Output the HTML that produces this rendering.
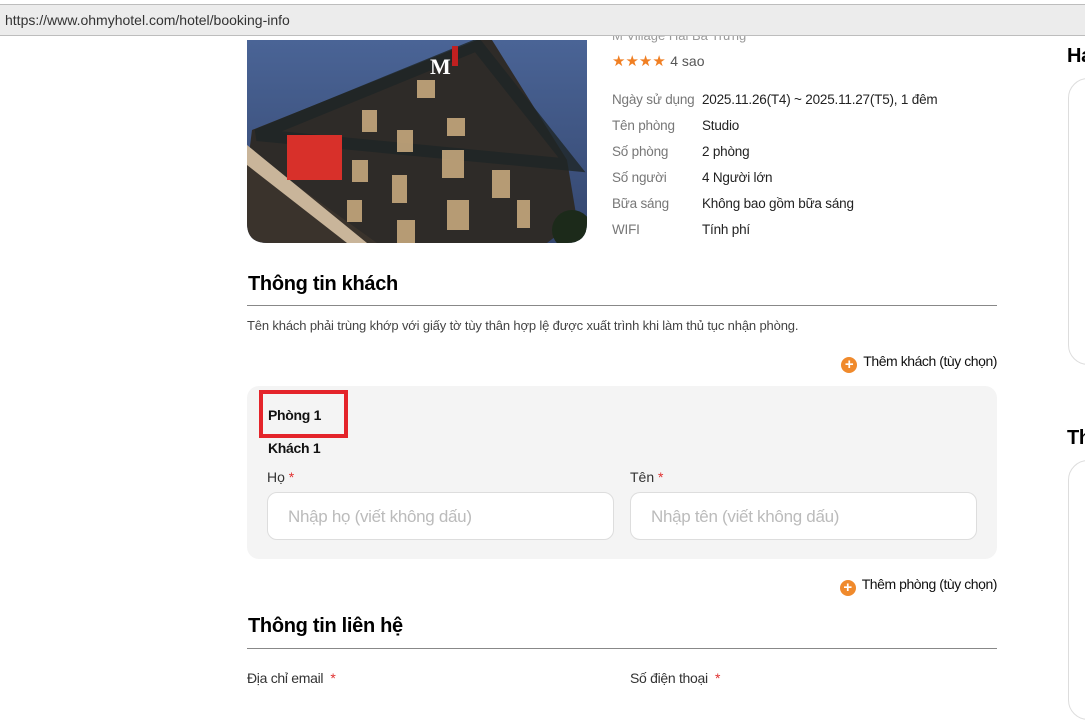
<!DOCTYPE html>
<html><head><meta charset="utf-8"><style>
*{margin:0;padding:0;box-sizing:border-box}
body{width:1085px;height:687px;overflow:hidden;background:#fff;font-family:"Liberation Sans",Arial,sans-serif;color:#111;position:relative}
.a{position:absolute;white-space:nowrap}
.bar{position:absolute;left:0;top:4px;width:1085px;height:32px;background:#ececec;border-top:1px solid #bdbdbd;border-bottom:1px solid #bdbdbd;z-index:2}
.lbl{color:#777;font-size:13.5px;letter-spacing:-0.2px}
.val{color:#222;font-size:13.5px;letter-spacing:-0.2px}
.h2{font-size:20px;font-weight:bold;color:#000;letter-spacing:-0.3px}
.line{position:absolute;left:247px;width:750px;height:1px;background:#888}
.inp{position:absolute;height:48px;background:#fff;border:1px solid #ddd;border-radius:10px;font-size:17px;color:#bbb;padding:14px 0 0 20px;letter-spacing:-0.3px}
.plus{display:inline-block;width:16px;height:16px;border-radius:50%;background:#f08a2c;color:#fff;font-size:15px;line-height:16px;text-align:center;font-weight:bold;vertical-align:-3px;margin-right:6px;letter-spacing:0}
.star{color:#f07f23;font-size:15px;letter-spacing:0}
.req{color:#e03030}
.add{font-size:14px;color:#111;letter-spacing:-0.45px}
</style></head><body>
<div class="bar"></div>
<div class="a" style="left:5px;top:12px;font-size:14px;color:#333;z-index:3">https://www.ohmyhotel.com/hotel/booking-info</div>

<svg class="a" style="left:247px;top:40px" width="340" height="203" viewBox="0 0 340 203">
<defs><clipPath id="c"><path d="M0 0H340V183Q340 203 320 203H20Q0 203 0 183Z"/></clipPath>
<linearGradient id="s" x1="0" y1="0" x2="0" y2="1"><stop offset="0" stop-color="#4a6496"/><stop offset="1" stop-color="#34466e"/></linearGradient></defs>
<g clip-path="url(#c)">
<rect width="340" height="203" fill="url(#s)"/>
<polygon points="5,90 230,0 245,0 320,120 330,180 300,203 90,203 0,130" fill="#2e2b28"/>
<polygon points="10,95 230,5 325,125" fill="none" stroke="#1e2626" stroke-width="12" opacity=".8"/>
<polygon points="0,110 130,203 0,203" fill="#3a332c"/>
<polygon points="0,105 120,203 100,203 0,125" fill="#c9b59a"/>
<rect x="40" y="95" width="55" height="45" fill="#d8302a"/>
<g fill="#d9b888" opacity=".8">
<rect x="105" y="120" width="16" height="22"/><rect x="150" y="90" width="16" height="22"/><rect x="200" y="78" width="18" height="18"/>
<rect x="195" y="110" width="22" height="28"/><rect x="145" y="135" width="15" height="28"/><rect x="200" y="160" width="22" height="30"/>
<rect x="100" y="160" width="15" height="22"/><rect x="150" y="180" width="18" height="23"/><rect x="115" y="70" width="15" height="22"/><rect x="170" y="40" width="18" height="18"/>
<rect x="245" y="130" width="18" height="28"/><rect x="270" y="160" width="13" height="28"/>
</g>
<text x="183" y="34" font-family="Liberation Serif" font-weight="bold" font-size="22" fill="#fff">M</text>
<rect x="205" y="6" width="6" height="20" fill="#c02020"/>
<circle cx="325" cy="190" r="20" fill="#1c2a1a"/>
</g></svg>

<div class="a" style="left:612px;top:28px;font-size:13px;color:#999">M Village Hai Bà Trưng</div>
<div class="a" style="left:612px;top:52px"><span class="star">★★★★</span> <span style="font-size:14px;color:#555">4 sao</span></div>
<div class="a lbl" style="left:612px;top:92px">Ngày sử dụng</div><div class="a val" style="left:702px;top:92px">2025.11.26(T4) ~ 2025.11.27(T5), 1 đêm</div>
<div class="a lbl" style="left:612px;top:118px">Tên phòng</div><div class="a val" style="left:702px;top:118px">Studio</div>
<div class="a lbl" style="left:612px;top:144px">Số phòng</div><div class="a val" style="left:702px;top:144px">2 phòng</div>
<div class="a lbl" style="left:612px;top:170px">Số người</div><div class="a val" style="left:702px;top:170px">4 Người lớn</div>
<div class="a lbl" style="left:612px;top:196px">Bữa sáng</div><div class="a val" style="left:702px;top:196px">Không bao gồm bữa sáng</div>
<div class="a lbl" style="left:612px;top:222px">WIFI</div><div class="a val" style="left:702px;top:222px">Tính phí</div>

<div class="a h2" style="left:248px;top:273px">Thông tin khách</div>
<div class="line" style="top:305px"></div>
<div class="a" style="left:247px;top:318px;font-size:13px;color:#444;letter-spacing:-0.15px">Tên khách phải trùng khớp với giấy tờ tùy thân hợp lệ được xuất trình khi làm thủ tục nhận phòng.</div>
<div class="a add" style="right:88px;top:353px"><span class="plus">+</span>Thêm khách (tùy chọn)</div>

<div class="a" style="left:247px;top:386px;width:750px;height:173px;background:#f4f4f4;border-radius:12px"></div>
<div class="a" style="left:259px;top:390px;width:89px;height:48px;border:4px solid #e4242a"></div>
<div class="a" style="left:268px;top:407px;font-size:14px;font-weight:bold;letter-spacing:-0.3px">Phòng 1</div>
<div class="a" style="left:268px;top:440px;font-size:14px;font-weight:bold;letter-spacing:-0.3px">Khách 1</div>
<div class="a" style="left:267px;top:469px;font-size:14px;color:#333">Họ <span class="req">*</span></div>
<div class="a" style="left:630px;top:469px;font-size:14px;color:#333">Tên <span class="req">*</span></div>
<div class="inp" style="left:267px;top:492px;width:347px">Nhập họ (viết không dấu)</div>
<div class="inp" style="left:630px;top:492px;width:347px">Nhập tên (viết không dấu)</div>

<div class="a add" style="right:88px;top:576px"><span class="plus">+</span>Thêm phòng (tùy chọn)</div>

<div class="a h2" style="left:248px;top:615px">Thông tin liên hệ</div>
<div class="line" style="top:648px"></div>
<div class="a" style="left:247px;top:670px;font-size:14px;color:#333;letter-spacing:-0.3px">Địa chỉ email <span class="req">&nbsp;*</span></div>
<div class="a" style="left:630px;top:670px;font-size:14px;color:#333;letter-spacing:-0.3px">Số điện thoại <span class="req">&nbsp;*</span></div>

<div class="a h2" style="left:1067px;top:45px">Hạ</div>
<div class="a" style="left:1068px;top:78px;width:60px;height:287px;border:1px solid #ddd;border-radius:20px"></div>
<div class="a h2" style="left:1067px;top:427px">Th</div>
<div class="a" style="left:1068px;top:460px;width:60px;height:260px;border:1px solid #ddd;border-radius:20px"></div>
</body></html>
